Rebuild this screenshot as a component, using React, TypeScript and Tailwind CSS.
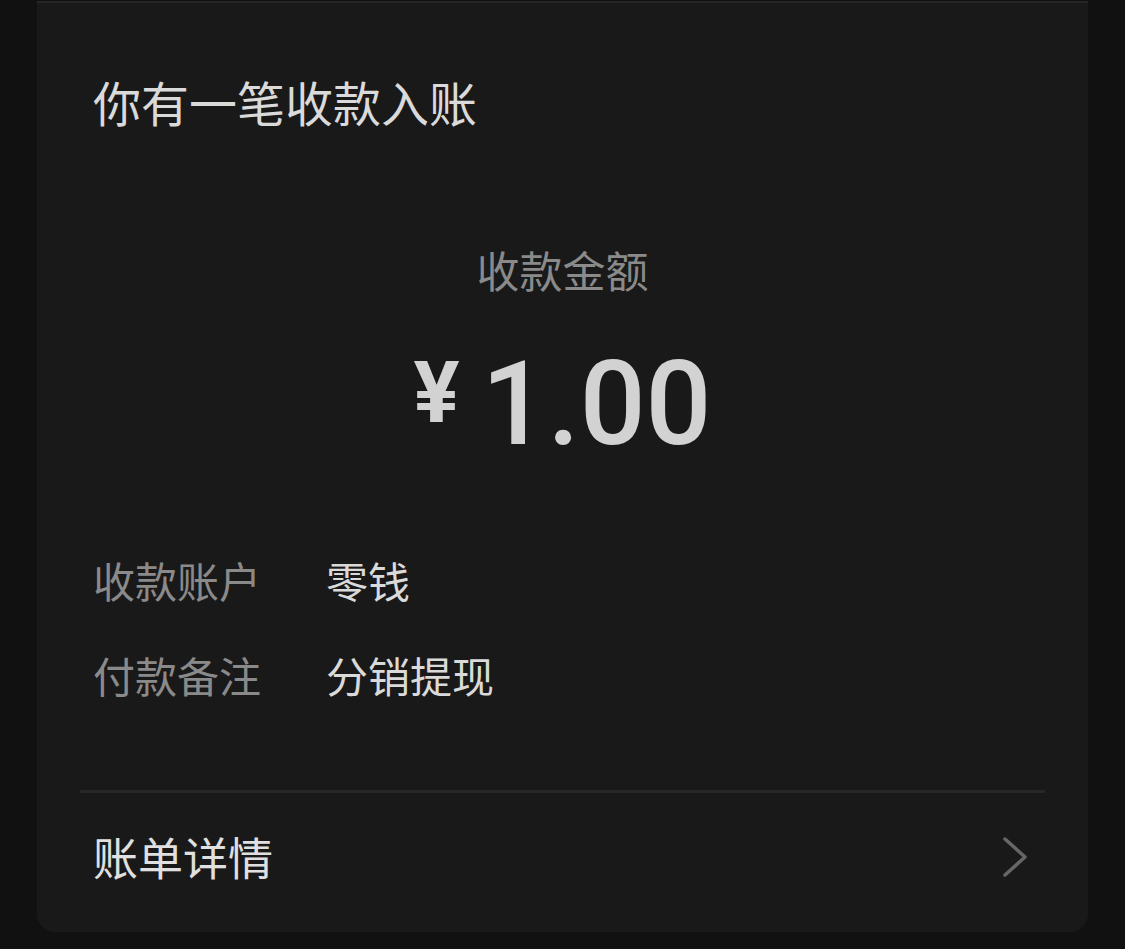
const cjk = { fontFamily: '"Noto Sans CJK SC", "Noto Sans", sans-serif' };
const num = { fontFamily: 'Roboto, "Noto Sans", sans-serif' };

export default function App() {
  const rows = [
    { label: '收款账户', value: '零钱' },
    { label: '付款备注', value: '分销提现' },
  ];

  return (
    <div className="w-[1125px] h-[949px] overflow-hidden bg-[#111111]" style={cjk}>
      <div className="ml-[37px] w-[1051px] h-[931px] bg-[#191919] rounded-b-[18px] border-t-2 border-[#262626] mt-[1px] flex flex-col">
        <div className="pl-[56px] pt-[74px] text-[48px] leading-none text-[#dadada]">
          你有一笔收款入账
        </div>

        <div className="mt-[123px] text-center text-[43px] leading-none text-[#8a8a8a]">收款金额</div>

        <div className="mt-[55px] flex justify-center items-start text-[#d2d2d2]">
          <span className="mt-[4px] mr-[22px] text-[86px] leading-none font-bold" style={num}>
            ¥
          </span>
          <span className="text-[116px] leading-none font-medium" style={num}>
            1.00
          </span>
        </div>

        <div className="mt-[97px] pl-[56px] flex flex-col gap-[53px]">
          {rows.map((r) => (
            <div key={r.label} className="flex items-center text-[42px] leading-none">
              <span className="w-[233px] text-[#8a8a8a]">{r.label}</span>
              <span className="text-[#dadada]">{r.value}</span>
            </div>
          ))}
        </div>

        <div className="mx-[43px] mt-[94px] h-[3px] bg-[#272727]" />

        <div className="flex-1 flex items-center justify-between pl-[56px] pr-[60px] pb-[12px]">
          <span className="text-[45px] leading-none text-[#e0e0e0]">账单详情</span>
          <svg width="26" height="40" viewBox="0 0 26 40" fill="none">
            <path d="M3 2 L23 20 L3 38" stroke="#666666" strokeWidth="3.5" strokeLinecap="round" strokeLinejoin="round" />
          </svg>
        </div>
      </div>
    </div>
  );
}
